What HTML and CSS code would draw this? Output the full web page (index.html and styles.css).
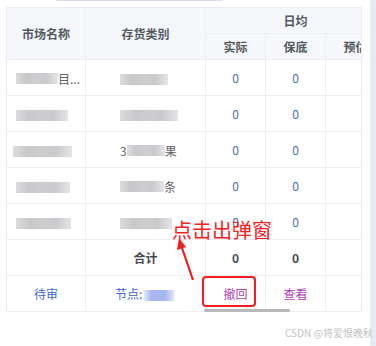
FILE: index.html
```html
<!DOCTYPE html>
<html lang="zh">
<head>
<meta charset="utf-8">
<link rel="stylesheet" href="styles.css">
</head>
<body>
<div class="page">
  <div class="main">
    <div class="search-stub"></div>
    <div class="table-wrap">
      <table class="grid">
        <colgroup>
          <col class="c1"><col class="c2"><col class="c3"><col class="c4"><col class="c5">
        </colgroup>
        <thead>
          <tr class="h1">
            <th rowspan="2">市场名称</th>
            <th rowspan="2">存货类别</th>
            <th colspan="3">日均</th>
          </tr>
          <tr class="h2">
            <th>实际</th>
            <th>保底</th>
            <th class="clip">预估</th>
          </tr>
        </thead>
        <tbody>
          <tr>
            <td class="left"><span class="blur w42"></span><span class="tail">目...</span></td>
            <td class="left2"><span class="blur w48"></span></td>
            <td class="num">0</td><td class="num">0</td><td></td>
          </tr>
          <tr>
            <td class="left"><span class="blur w52"></span></td>
            <td class="left2"><span class="blur w58"></span></td>
            <td class="num">0</td><td class="num">0</td><td></td>
          </tr>
          <tr>
            <td class="left3"><span class="blur w59"></span></td>
            <td class="left2"><span class="tail">3</span><span class="blur w38"></span><span class="tail">果</span></td>
            <td class="num">0</td><td class="num">0</td><td></td>
          </tr>
          <tr>
            <td class="left"><span class="blur w54"></span></td>
            <td class="left2"><span class="blur w44"></span><span class="tail">条</span></td>
            <td class="num">0</td><td class="num">0</td><td></td>
          </tr>
          <tr>
            <td class="left"><span class="blur w55"></span></td>
            <td class="left2"><span class="blur w52"></span></td>
            <td class="num">0</td><td class="num">0</td><td></td>
          </tr>
          <tr class="total">
            <td></td>
            <td>合计</td>
            <td>0</td><td>0</td><td></td>
          </tr>
          <tr class="actions">
            <td><span class="link">待审</span></td>
            <td><span class="link">节点:</span><span class="blur-blue"></span></td>
            <td><span class="purple">撤回</span></td>
            <td><span class="purple">查看</span></td>
            <td></td>
          </tr>
        </tbody>
      </table>
      <div class="hscroll"></div>
    </div>
    <div class="watermark">CSDN @将爱恨晚秋</div>
    <div class="red-box"></div>
    <div class="note">点击出弹窗</div>
    <svg class="arrow" width="30" height="50" viewBox="0 0 30 50">
      <path d="M17 44 L5 9" stroke="#f01e1e" stroke-width="2.2" fill="none"/>
      <path d="M3 2 L1 14 L10 11 Z" fill="#f01e1e"/>
    </svg>
  </div>
  <div class="vscroll"></div>
</div>
</body>
</html>
```

FILE: styles.css
```css
html, body {
  margin: 0;
  padding: 0;
  background: #ffffff;
}
body {
  font-family: "Noto Sans CJK SC", "Noto Sans", sans-serif;
  font-size: 12px;
  color: #606266;
}
.page {
  display: flex;
  width: 376px;
  height: 346px;
  overflow: hidden;
}
.main {
  position: relative;
  flex: 1;
  padding-left: 6px;
}
.vscroll {
  width: 6px;
  background: #e8ebf1;
}
.search-stub {
  margin-left: 49px;
  width: 166px;
  height: 1px;
  border: 1px solid #dcdfe6;
  border-top: none;
  border-radius: 0 0 4px 4px;
  margin-top: -1px;
}
.table-wrap {
  position: relative;
  margin-top: 6px;
  width: 354px;
  overflow: hidden;
  border: 1px solid #ebeef5;
  border-bottom: none;
}
.grid {
  border-collapse: collapse;
  table-layout: fixed;
  width: 379px;
  margin: -1px 0 0 -1px;
}
.c1 { width: 79px; }
.c2 { width: 120px; }
.c3 { width: 60px; }
.c4 { width: 60px; }
.c5 { width: 60px; }
.grid th, .grid td {
  border: 1px solid #ebeef5;
  padding: 0;
  text-align: center;
  white-space: nowrap;
  overflow: hidden;
}
.grid th {
  background: #f5f7fa;
  color: #555a62;
  font-weight: bold;
  font-size: 12px;
}
.h1 th { height: 24px; }
.h2 th { height: 25px; }
.h1 th[colspan] { vertical-align: middle; padding-bottom: 1px; }
.grid td { height: 35px; font-size: 12px; }
.num { color: #4a6aa8; }
.left { text-align: left !important; padding-left: 9px !important; }
.left3 { text-align: left !important; padding-left: 6px !important; }
.left2 { text-align: left !important; padding-left: 34px !important; }
.blur {
  display: inline-block;
  height: 11px;
  vertical-align: middle;
  background: linear-gradient(90deg, #d8d8da 0%, #c2c2c5 25%, #c8c8cb 50%, #c4c4c7 72%, #dfe2e6 100%);
  opacity: 0.9;
}
.w38 { width: 38px; }
.w42 { width: 42px; }
.w44 { width: 44px; }
.w48 { width: 48px; }
.w52 { width: 52px; }
.w54 { width: 54px; }
.w55 { width: 55px; }
.w58 { width: 58px; }
.w59 { width: 59px; }
.tail { vertical-align: middle; color: #606266; }
.total td { font-weight: bold; color: #444a55; }
.actions td { height: 35px; }
.link { color: #3d63dd; }
.purple { color: #b041b5; }
.blur-blue {
  display: inline-block;
  width: 30px;
  height: 11px;
  vertical-align: middle;
  margin-left: 2px;
  background: linear-gradient(90deg, #e2e7f8 0%, #a9b8f0 25%, #a7b6ef 70%, #dde4f8 100%);
}
.actions td:nth-child(2) { text-align: left; padding-left: 29px; }
.hscroll {
  position: absolute;
  left: 197px;
  bottom: 0;
  width: 86px;
  height: 3px;
  background: #b8b8ba;
  border-radius: 2px;
}
.watermark {
  position: absolute;
  left: 285px;
  top: 325px;
  font-size: 10px;
  color: #c4c4c4;
  white-space: nowrap;
}
.red-box {
  position: absolute;
  left: 202px;
  top: 276px;
  width: 50px;
  height: 27px;
  border: 2px solid #f51d1d;
  border-radius: 4px;
}
.note {
  position: absolute;
  left: 172px;
  top: 216px;
  font-size: 20px;
  line-height: 28px;
  color: #f52222;
  white-space: nowrap;
}
.arrow {
  position: absolute;
  left: 176px;
  top: 236px;
}
```
